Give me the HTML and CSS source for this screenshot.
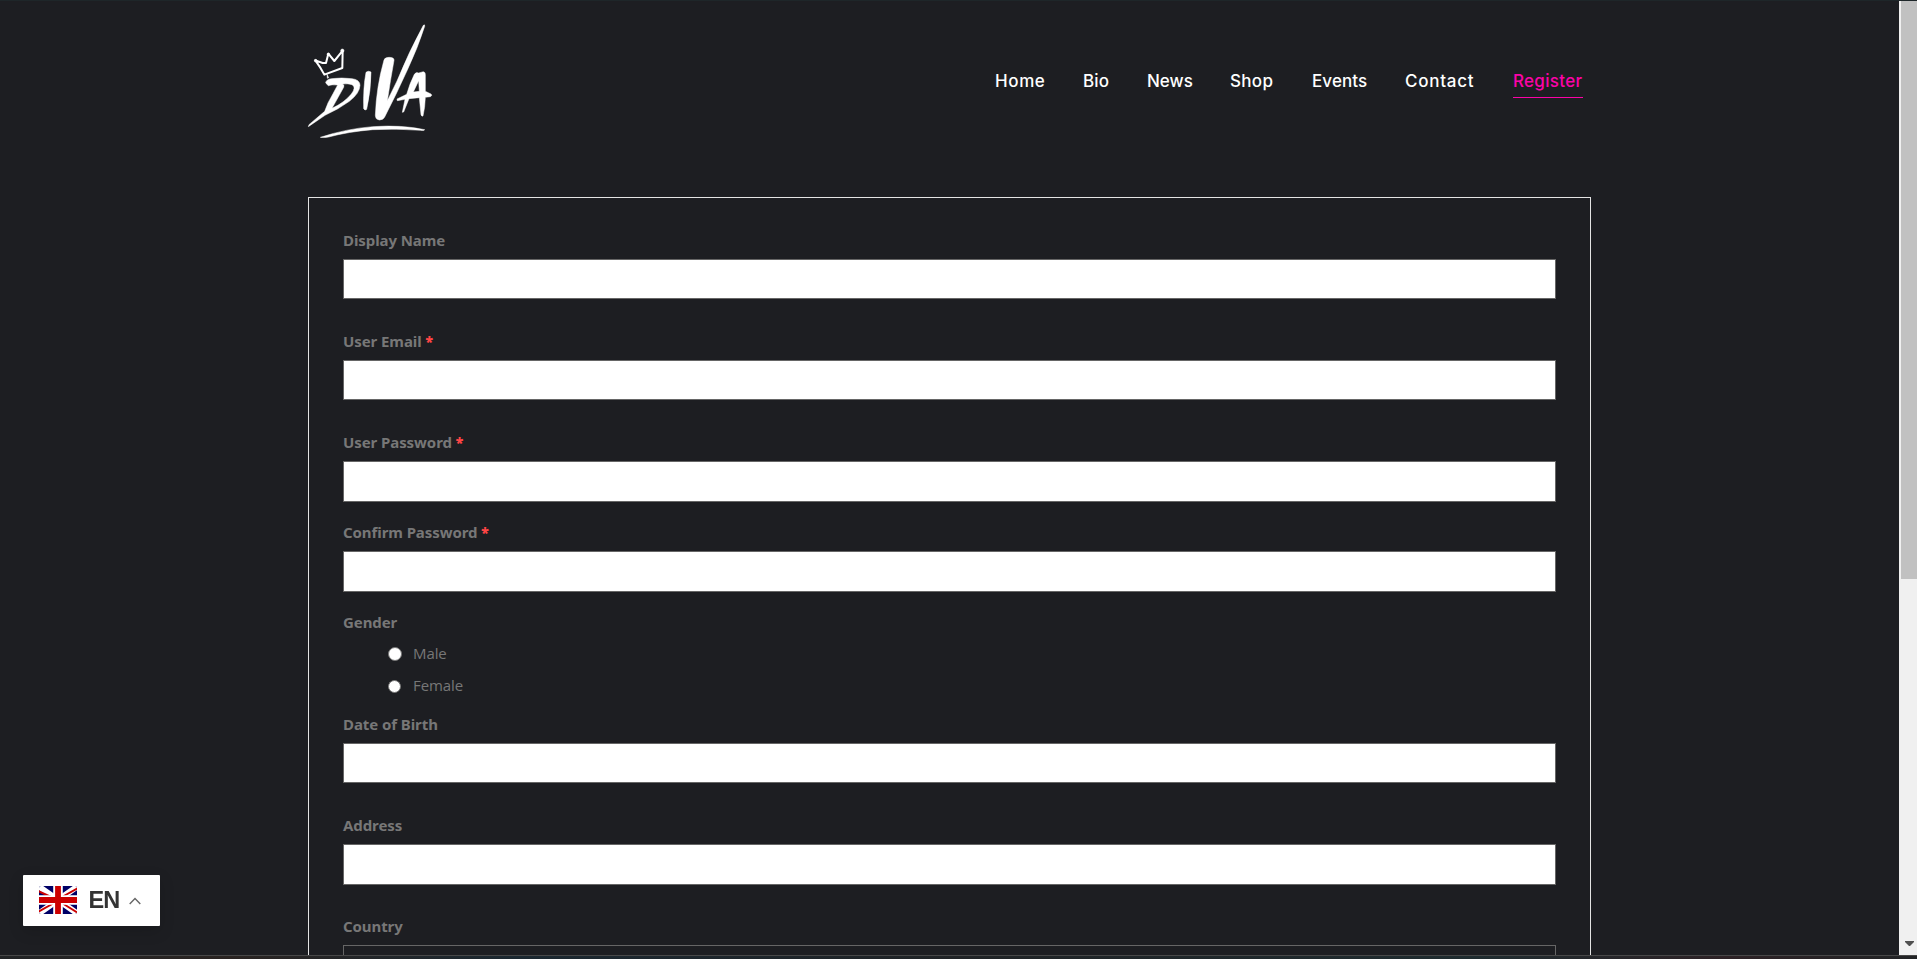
FILE: index.html
```html
<!DOCTYPE html>
<html lang="en">
<head>
<meta charset="utf-8">
<title>Diva - Register</title>
<link rel="stylesheet" href="styles.css">
</head>
<body>
<div class="window">
  <div class="viewport">
    <div class="page">
      <header class="header">
        <a class="logo" aria-label="Diva">
          <svg width="160" height="140" viewBox="0 0 480 420" fill="#fff" stroke="#fff" stroke-width="1.5" stroke-linejoin="round">
            <path d="M76 151L98 159L108 159L115 131L133 153L158 122L157 174Q130 184 103 194Q93 174 76 151Z" fill="none" stroke-width="6"/>
            <circle cx="77" cy="152" r="4"/><circle cx="115" cy="133" r="4"/><circle cx="157" cy="122" r="5"/>
            <path d="M111 193L116 203L112 205Z"/>
            <path fill-rule="evenodd" d="M107 219Q108 208 124 206Q155 202 186 206Q210 209 210 226Q209 250 178 274Q145 298 105 316L55 350L57 344L104 304Q113 277 129 251L143 225Q126 223 115 227ZM157 222Q164 224 161 232L126 295Q164 277 184 252Q200 231 186 224Q173 220 157 222Z"/>
            <path d="M228 187Q235 181 243 186Q243 240 230 298Q225 303 221 296Q219 235 228 187Z"/>
            <path d="M282 150Q284 142 297 142Q313 142 312 151Q301 212 292 272L321 213Q357 125 400 46Q405 42 404 49Q384 112 352 180Q319 253 284 321Q280 330 268 330Q256 329 256 316Q259 231 282 150Z"/>
            <path fill-rule="evenodd" d="M373 193Q378 185 386 189L400 185Q407 187 406 194L406 244L423 252Q428 257 421 260L406 262Q405 294 399 318Q395 320 393 314L388 263L357 266L341 306L337 307L345 268L322 272L321 267L350 253Q359 221 373 193ZM386 212L370 246L388 244Z"/>
            <path d="M91 382Q170 356 248 350Q335 344 404 359Q402 363 391 361Q320 355 248 359Q175 365 116 381Q101 384 91 382Z"/>
          </svg>
        </a>
        <nav class="nav">
          <a class="nav-item home">Home</a>
          <a class="nav-item bio">Bio</a>
          <a class="nav-item news">News</a>
          <a class="nav-item shop">Shop</a>
          <a class="nav-item events">Events</a>
          <a class="nav-item contact">Contact</a>
          <a class="nav-item register">Register</a>
        </nav>
      </header>
      <form class="form">
        <div class="field"><label>Display Name</label><div class="input"></div></div>
        <div class="field"><label>User Email <b>*</b></label><div class="input"></div></div>
        <div class="field compact"><label>User Password <b>*</b></label><div class="input tall"></div></div>
        <div class="field compact"><label>Confirm Password <b>*</b></label><div class="input tall"></div></div>
        <div class="field gender"><label>Gender</label>
          <div class="choice"><span class="radio"></span><span class="option">Male</span></div>
          <div class="choice"><span class="radio small"></span><span class="option">Female</span></div>
        </div>
        <div class="field"><label>Date of Birth</label><div class="input"></div></div>
        <div class="field"><label>Address</label><div class="input tall"></div></div>
        <div class="field"><label>Country</label><div class="input select"></div></div>
      </form>
    </div>
    <div class="scrollbar"><div class="thumb"></div><svg class="arrow" width="9" height="5" viewBox="0 0 9 5"><path d="M0 0H9V1L5 5H4L0 1Z" fill="#505050"/></svg></div>
  </div>
  <div class="edge"></div>
</div>
<div class="lang">
  <svg class="flag" width="38" height="28" viewBox="0 0 38 28">
    <clipPath id="r"><rect width="38" height="28" rx="2"/></clipPath>
    <g clip-path="url(#r)">
      <path fill="#006" d="M0 0H38V28H0Z"/>
      <path d="M-1 0L39 28M39 0L-1 28" stroke="#fff" stroke-width="6"/>
      <path d="M-1 5L12 11M39 2L23 11M39 27L23 17M-1 26L15 17" stroke="#c00" stroke-width="2"/>
      <path d="M19 0V28M0 14H38" stroke="#fff" stroke-width="9.6"/>
      <path d="M19 0V28M0 14H38" stroke="#c00" stroke-width="5.8"/>
    </g>
  </svg>
  <span class="code">EN</span>
  <svg class="caret" width="12" height="8" viewBox="0 0 12 8"><path d="M.7 7L6 1.5L11.3 7" fill="none" stroke="#666" stroke-width="1.4"/></svg>
</div>
</body>
</html>
```
FILE: styles.css
```css
* { box-sizing: border-box; }
body { margin: 0; background: #1d1e22; overflow: hidden; }
.window { height: 959px; display: flex; flex-direction: column; }
.viewport { height: 955px; display: flex; overflow: hidden; border-top: 1px solid #1e2629; }
.page { width: 1899px; flex: none; padding: 0 308px; }
.header { height: 196px; display: flex; justify-content: space-between; }
.logo { margin: 9px 0 0 -18px; width: 160px; height: 140px; }
.logo svg { display: block; }
.nav { display: flex; gap: 38px; padding-top: 69px; margin-right: 8px; height: 98px; }
.nav-item { height: 28px; font: 500 17px/22px Inter, sans-serif; color: #fff; white-space: nowrap; }
.home { width: 50px; letter-spacing: .6px; }
.bio { width: 26px; letter-spacing: .1px; }
.news { width: 45px; }
.shop { width: 44px; letter-spacing: .3px; }
.events { width: 55px; letter-spacing: .1px; }
.contact { width: 70px; letter-spacing: .75px; }
.register { width: 70px; letter-spacing: .3px; color: #fb03a7; border-bottom: 1px solid #fb03a7; }
.form { width: 1283px; height: 900px; border: 1px solid #e4e4e4; padding: 28px 34px; display: flex; flex-direction: column; }
.field { height: 101px; flex: none; color: #777; }
.field.compact { height: 90px; }
.field.gender { height: 102px; }
.field label { display: block; height: 33px; padding-top: 2px; font: bold 15px/24px "Noto Sans", sans-serif; letter-spacing: -.08px; color: #777; }
.field b { color: #ff4545; font-size: 14px; }
.input { height: 40px; background: #fff; border: 1px solid #666; }
.input.tall { height: 41px; }
.input.select { background: transparent; }
.choice { height: 32px; display: flex; align-items: center; gap: 11px; padding-left: 45px; font: 15px/24px "Open Sans", sans-serif; letter-spacing: -.1px; }
.option { padding-bottom: 2px; }
.gender label { height: 30px; }
.radio { width: 14px; height: 14px; border-radius: 50%; background: #fff; border: 1px solid #767676; }
.radio.small { width: 13px; height: 13px; margin-right: 1px; }
.scrollbar { width: 18px; background: #f0f0f0; padding-left: 2px; display: flex; flex-direction: column; justify-content: space-between; }
.thumb { height: 578px; background: #c1c1c1; }
.arrow { margin: 0 0 9px 4px; }
.edge { height: 4px; border-top: 1px solid #484848; background: linear-gradient(90deg, #222426, #2a2422 12%, #1b2831 27%, #202326 50%, #1f2c30 77%, #2d2226 90%, #222426); }
.lang { position: fixed; left: 23px; top: 875px; width: 137px; height: 51px; border-radius: 1px; background: #fff; display: flex; align-items: center; padding: 0 0 2px 16px; box-shadow: 0 5px 15px rgba(0,0,0,.15); }
.flag { flex: none; }
.code { margin-left: 11.5px; width: 33px; font: bold 23.5px/28px "Liberation Sans", Arial, sans-serif; letter-spacing: -1px; color: #333; }
.caret { margin: 3px 0 0 7px; }
```
